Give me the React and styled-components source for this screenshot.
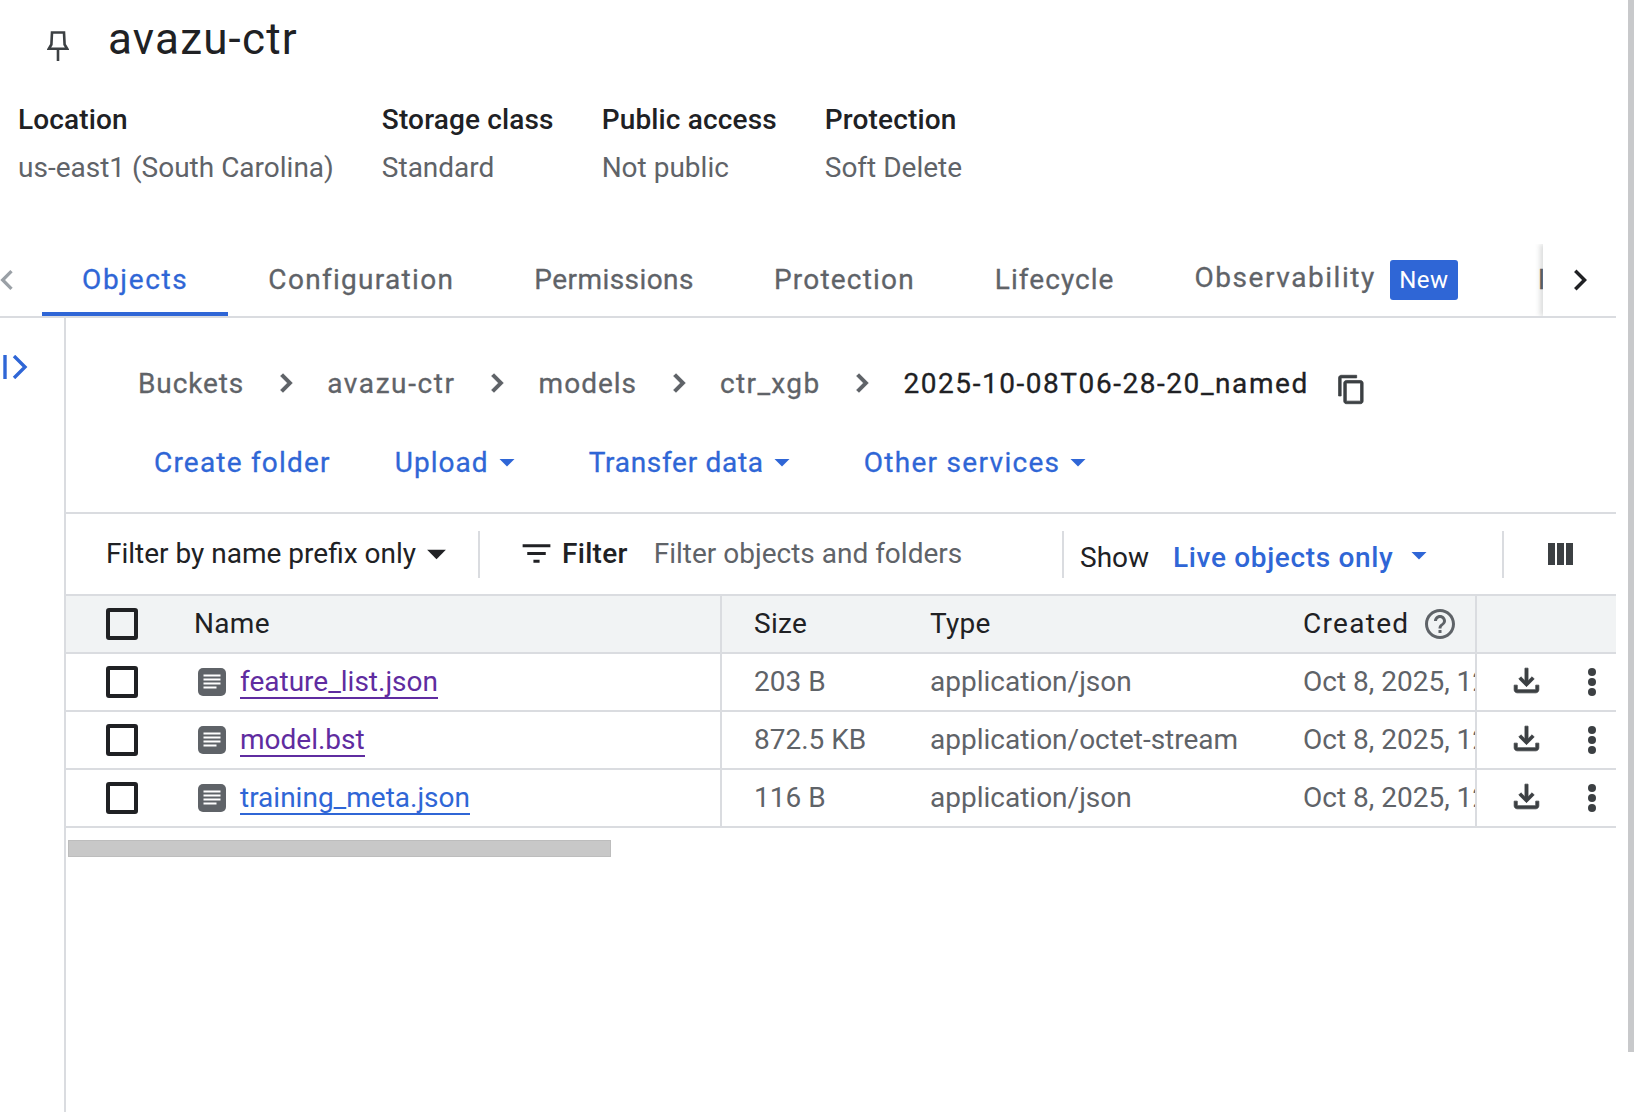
import React from "react";
import styled, { createGlobalStyle, css } from "styled-components";

const GlobalStyle = createGlobalStyle`
  html, body {
    margin: 0;
    padding: 0;
    background: #fff;
  }
  body {
    font-family: Roboto, "Liberation Sans", sans-serif;
    color: #202124;
  }
`;

const BLUE = "#2f66d6";
const GREY = "#5f6368";
const LINE = "#dadce0";

// the reference's heading font is wider and a little lighter than Roboto Medium
const wideText = css`
  font-weight: 400;
  letter-spacing: ${(p) => p.$track ?? 1.35}px;
  -webkit-text-stroke: 0.3px currentColor;
`;

const Page = styled.div`
  width: 1634px;
  height: 1112px;
  overflow: hidden;
  display: flex;
  font-size: 28px;
`;

const Content = styled.div`
  width: 1616px;
  display: flex;
  flex-direction: column;
`;

const PageScroll = styled.div`
  width: 6px;
  height: 1052px;
  margin-left: 12px;
  background: #c8c9cb;
`;

const TitleRow = styled.div`
  height: 78px;
  display: flex;
  align-items: center;
  padding-left: 47px;
  gap: 39px;
`;

const PinIcon = styled.svg`
  margin-top: 13px;
  color: #3c4043;
`;

const Title = styled.h1`
  margin: 0;
  font-size: 44px;
  font-weight: 400;
  letter-spacing: 1.2px;
  line-height: 78px;
`;

const Meta = styled.div`
  display: flex;
  gap: 48px;
  margin: 18px 0 52px;
  padding-left: 18px;
`;

const MetaLabel = styled.div`
  line-height: 48px;
  font-weight: 500;
  letter-spacing: 0.15px;
`;

const MetaValue = styled.div`
  line-height: 48px;
  color: ${GREY};
`;

const TabBar = styled.div`
  position: relative;
  height: 72px;
  display: flex;
  align-items: stretch;
  border-bottom: 2px solid ${LINE};
  overflow: hidden;
`;

const BackPage = styled.div`
  width: 42px;
  flex: none;
  display: flex;
  align-items: center;
  overflow: hidden;
  color: #9aa0a6;

  svg {
    margin-left: -13px;
    flex: none;
  }
`;

const Tab = styled.div`
  flex: none;
  display: flex;
  align-items: center;
  gap: 14px;
  padding: 0 40px 2px;
  color: ${(p) => (p.$active ? BLUE : GREY)};
  box-shadow: ${(p) => (p.$active ? `inset 0 -4px 0 ${BLUE}` : "none")};
  ${wideText}
`;

const TabText = styled.span`
  position: relative;
  top: ${(p) => (p.$raised ? "-2px" : "0")};
`;

const NewBadge = styled.span`
  background: ${BLUE};
  color: #fff;
  border-radius: 3px;
  width: 68px;
  height: 40px;
  margin-top: 2px;
  font-size: 24px;
  line-height: 40px;
  letter-spacing: 0.4px;
  text-align: center;
  -webkit-text-stroke: 0;
`;

const NextPage = styled.div`
  position: absolute;
  top: 0;
  right: 0;
  bottom: 0;
  width: 73px;
  background: #fff;
  box-shadow: -3px 0 5px rgba(60, 64, 67, 0.18);
  display: flex;
  align-items: center;
  padding-left: 16px;
  box-sizing: border-box;
  color: #202124;
`;

const Body = styled.div`
  flex: 1;
  display: flex;
`;

const Rail = styled.div`
  width: 64px;
  flex: none;
  border-right: 2px solid ${LINE};
  padding-top: 37px;
  color: ${BLUE};

  svg {
    display: block;
    margin-left: 3px;
  }
`;

const Main = styled.div`
  flex: 1;
  min-width: 0;
`;

const Crumbs = styled.div`
  display: flex;
  align-items: center;
  height: 50px;
  padding: 40px 0 0 72px;
  gap: 23.5px;
  color: ${GREY};

  > svg {
    stroke: currentColor;
    stroke-width: 0.7;
  }
`;

const Crumb = styled.span`
  ${wideText}
`;

const Current = styled.span`
  color: #202124;
  ${wideText}
`;

const CopyButton = styled.span`
  display: flex;
  position: relative;
  top: 6px;
  margin-left: 4px;
  color: #3c4043;

  svg {
    stroke: currentColor;
    stroke-width: 0.6;
  }
`;

const Actions = styled.div`
  display: flex;
  align-items: center;
  height: 50px;
  margin-top: 29px;
  padding: 0 0 25px 88px;
  gap: 64px;
  border-bottom: 2px solid ${LINE};
`;

const ActionButton = styled.span`
  display: flex;
  align-items: center;
  color: ${BLUE};
  ${wideText}
`;

const FilterRow = styled.div`
  display: flex;
  align-items: center;
  height: 80px;
`;

const Divider = styled.span`
  width: 2px;
  height: 47px;
  background: ${LINE};
  flex: none;
`;

const PrefixSelect = styled.span`
  width: 412px;
  flex: none;
  display: flex;
  align-items: center;
  padding: 0 0 2px 40px;
  box-sizing: border-box;

  svg {
    margin-left: -2px;
    flex: none;
  }
`;

const FilterField = styled.span`
  width: 582px;
  flex: none;
  display: flex;
  align-items: center;
  padding: 0 0 2px 38px;
  box-sizing: border-box;
`;

const FilterLabel = styled.span`
  font-weight: 500;
  letter-spacing: 0.3px;
  margin: 0 26px 0 7px;
`;

const Placeholder = styled.span`
  color: ${GREY};
`;

const ShowField = styled.span`
  width: 438px;
  flex: none;
  display: flex;
  align-items: center;
  padding: 6px 0 0 16px;
  box-sizing: border-box;
`;

const LiveLink = styled.span`
  display: flex;
  align-items: center;
  gap: 8px;
  margin-left: 24px;
  color: ${BLUE};
  font-weight: 500;
  letter-spacing: 0.65px;

  svg {
    margin-top: -4px;
  }
`;

const ColumnsIcon = styled.span`
  display: flex;
  margin-left: 44px;
  color: #3c4043;
`;

const Table = styled.div`
  border-top: 2px solid ${LINE};
`;

const TableRow = styled.div`
  display: grid;
  grid-template-columns: 656px 208px 373px 174px 1fr;
  height: 56px;
  border-bottom: 2px solid ${LINE};
  background: ${(p) => (p.$head ? "#f1f3f4" : "#fff")};
  color: ${(p) => (p.$head ? "#202124" : GREY)};
  letter-spacing: ${(p) => (p.$head ? "0.3px" : "0")};
`;

const Cell = styled.div`
  display: flex;
  align-items: center;
  white-space: nowrap;
  overflow: hidden;
  box-sizing: border-box;
  min-width: 0;
  padding: 0 0 2px ${(p) => p.$pad || 0}px;
  border-right: ${(p) => (p.$ruled ? `2px solid ${LINE}` : "none")};
`;

const CheckBox = styled.span`
  width: 32px;
  height: 32px;
  flex: none;
  box-sizing: border-box;
  border: 4px solid #202124;
  border-radius: 3px;
  margin: 2px 0 0 40px;
`;

const HeadName = styled.span`
  margin-left: 56px;
`;

const CreatedLabel = styled.span`
  letter-spacing: 1.3px;
`;

const FileIcon = styled.svg`
  flex: none;
  margin: 2px 14px 0 60px;
`;

const FileLink = styled.a`
  color: ${(p) => (p.$visited ? "#5f2ca0" : BLUE)};
  text-decoration: none;
  border-bottom: 2px solid currentColor;
  line-height: 30px;
  margin-top: 4px;
`;

const HelpIcon = styled.span`
  display: flex;
  margin: 2px 0 0 13px;
  color: ${GREY};
`;

const RowActions = styled.div`
  display: flex;
  align-items: center;
  padding-left: 31px;
  gap: 43px;
  color: #3c4043;
`;

const DownloadIcon = styled.svg`
  margin-bottom: 4px;
  stroke: currentColor;
  stroke-width: 0.5;
`;

const HScroll = styled.div`
  width: 543px;
  height: 17px;
  margin: 12px 0 0 2px;
  background: #c8c8c8;
  border: 1px solid #bdbdbd;
  box-sizing: border-box;
`;

const Icon = ({ d, size = 24, ...rest }) => (
  <svg width={size} height={size} viewBox="0 0 24 24" fill="currentColor" {...rest}>
    <path d={d} />
  </svg>
);

const RIGHT = "M10 6L8.59 7.41 13.17 12l-4.58 4.59L10 18l6-6z";
const LEFT = "M15.41 7.41L14 6l-6 6 6 6 1.41-1.41L10.83 12z";
const COPY = "M16 1H4c-1.1 0-2 .9-2 2v14h2V3h12V1zm3 4H8c-1.1 0-2 .9-2 2v14c0 1.1.9 2 2 2h11c1.1 0 2-.9 2-2V7c0-1.1-.9-2-2-2zm0 16H8V7h11v14z";
const CARET = "M7 10l5 5 5-5z";
const FILTER = "M10 18h4v-2h-4v2zM3 6v2h18V6H3zm3 7h12v-2H6v2z";
const HELP = "M11 18h2v-2h-2v2zm1-16C6.48 2 2 6.48 2 12s4.48 10 10 10 10-4.48 10-10S17.52 2 12 2zm0 18c-4.41 0-8-3.59-8-8s3.59-8 8-8 8 3.59 8 8-3.59 8-8 8zm0-14c-2.21 0-4 1.79-4 4h2c0-1.1.9-2 2-2s2 .9 2 2c0 2-3 1.75-3 5h2c0-2.25 3-2.5 3-5 0-2.21-1.79-4-4-4z";
const DOWNLOAD = "M18 15v3H6v-3H4v3c0 1.1.9 2 2 2h12c1.1 0 2-.9 2-2v-3h-2zm-1-4l-1.41-1.41L13 12.17V4h-2v8.17L8.41 9.59 7 11l5 5 5-5z";

const meta = [
  ["Location", "us-east1 (South Carolina)"],
  ["Storage class", "Standard"],
  ["Public access", "Not public"],
  ["Protection", "Soft Delete"],
];

const tabs = [
  ["Configuration", 1.3],
  ["Permissions", 0.45],
  ["Protection", 1.2],
  ["Lifecycle", 1.05],
];

const crumbs = [
  ["Buckets", 0.9],
  ["avazu-ctr", 1.6],
  ["models", 1],
  ["ctr_xgb", 1.35],
];

const files = [
  { name: "feature_list.json", size: "203 B", type: "application/json", visited: true },
  { name: "model.bst", size: "872.5 KB", type: "application/octet-stream", visited: true },
  { name: "training_meta.json", size: "116 B", type: "application/json", visited: false },
];

const App = () => {
  return (
    <Page>
      <GlobalStyle />
      <Content>
        <TitleRow>
          <PinIcon width="22" height="30" viewBox="0 0 22 30" fill="none" stroke="currentColor" strokeWidth="2.6">
            <path d="M5 1.5h12l.6 12 2.6 4.2H1.8l2.6-4.2zM11 18v12" />
          </PinIcon>
          <Title>avazu-ctr</Title>
        </TitleRow>

        <Meta>
          {meta.map(([label, value]) => (
            <div key={label}>
              <MetaLabel>{label}</MetaLabel>
              <MetaValue>{value}</MetaValue>
            </div>
          ))}
        </Meta>

        <TabBar>
          <BackPage>
            <Icon d={LEFT} size={40} />
          </BackPage>
          <Tab $active $track={1.65}>Objects</Tab>
          {tabs.map(([t, track]) => (
            <Tab key={t} $track={track}>{t}</Tab>
          ))}
          <Tab $track={1.55}>
            <TabText $raised>Observability</TabText>
            <NewBadge>New</NewBadge>
          </Tab>
          <Tab>Inventory reports</Tab>
          <NextPage>
            <Icon d={RIGHT} size={42} />
          </NextPage>
        </TabBar>

        <Body>
          <Rail>
            <svg width="26" height="24" viewBox="0 0 26 24" fill="none" stroke="currentColor" strokeWidth="3.4">
              <path d="M2 0v24M11 1l11 11-11 11" />
            </svg>
          </Rail>
          <Main>
            <Crumbs>
              {crumbs.map(([c, track]) => (
                <React.Fragment key={c}>
                  <Crumb $track={track}>{c}</Crumb>
                  <Icon d={RIGHT} size={36} />
                </React.Fragment>
              ))}
              <Current $track={1.55}>2025-10-08T06-28-20_named</Current>
              <CopyButton>
                <Icon d={COPY} size={31} />
              </CopyButton>
            </Crumbs>

            <Actions>
              <ActionButton $track={1.2}>Create folder</ActionButton>
              <ActionButton $track={1.05}>
                Upload <Icon d={CARET} size={36} />
              </ActionButton>
              <ActionButton $track={0.7}>
                Transfer data <Icon d={CARET} size={36} />
              </ActionButton>
              <ActionButton $track={1.3}>
                Other services <Icon d={CARET} size={36} />
              </ActionButton>
            </Actions>

            <FilterRow>
              <PrefixSelect>
                Filter by name prefix only <Icon d={CARET} size={45} />
              </PrefixSelect>
              <Divider />
              <FilterField>
                <Icon d={FILTER} size={37} />
                <FilterLabel>Filter</FilterLabel>
                <Placeholder>Filter objects and folders</Placeholder>
              </FilterField>
              <Divider />
              <ShowField>
                Show
                <LiveLink>
                  Live objects only <Icon d={CARET} size={36} />
                </LiveLink>
              </ShowField>
              <Divider />
              <ColumnsIcon>
                <svg width="26" height="26" viewBox="0 0 26 26" fill="currentColor">
                  <path d="M0 2h7v22H0zM9 2h7v22H9zM18 2h7v22h-7z" />
                </svg>
              </ColumnsIcon>
            </FilterRow>

            <Table>
              <TableRow $head>
                <Cell $ruled>
                  <CheckBox />
                  <HeadName>Name</HeadName>
                </Cell>
                <Cell $pad={32}>Size</Cell>
                <Cell>Type</Cell>
                <Cell $ruled>
                  <CreatedLabel>Created</CreatedLabel>
                  <HelpIcon>
                    <Icon d={HELP} size={36} />
                  </HelpIcon>
                </Cell>
                <Cell />
              </TableRow>
              {files.map((f) => (
                <TableRow key={f.name}>
                  <Cell $ruled>
                    <CheckBox />
                    <FileIcon width="28" height="28" viewBox="0 0 28 28">
                      <rect width="28" height="28" rx="5" fill="#5f6368" />
                      <path d="M5.5 7.5h17M5.5 11.5h17M5.5 15.5h17M5.5 19.5h13" stroke="#fff" strokeWidth="2" />
                    </FileIcon>
                    <FileLink $visited={f.visited}>{f.name}</FileLink>
                  </Cell>
                  <Cell $pad={32}>{f.size}</Cell>
                  <Cell>{f.type}</Cell>
                  <Cell $ruled>Oct 8, 2025, 12:34:56 PM</Cell>
                  <RowActions>
                    <DownloadIcon width="37" height="37" viewBox="0 0 24 24" fill="currentColor">
                      <path d={DOWNLOAD} />
                    </DownloadIcon>
                    <svg width="8" height="28" viewBox="0 0 8 28" fill="currentColor">
                      <circle cx="4" cy="4" r="4" />
                      <circle cx="4" cy="14" r="4" />
                      <circle cx="4" cy="24" r="4" />
                    </svg>
                  </RowActions>
                </TableRow>
              ))}
            </Table>
            <HScroll />
          </Main>
        </Body>
      </Content>
      <PageScroll />
    </Page>
  );
};

export default App;
